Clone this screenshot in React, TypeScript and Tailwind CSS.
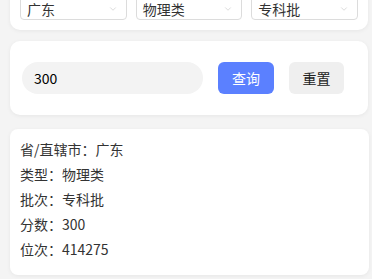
import { ChevronDown } from "lucide-react";

const font = { fontFamily: '"Noto Sans CJK SC", "Noto Sans", sans-serif' };

const selects = ["广东", "物理类", "专科批"];

const details = [
  ["省/直辖市", "广东"],
  ["类型", "物理类"],
  ["批次", "专科批"],
  ["分数", "300"],
  ["位次", "414275"],
];

function SelectBox({ value }: { value: string }) {
  return (
    <div className="flex h-8 w-[107px] items-end justify-between rounded-[4px] border border-[#dcdcdc] bg-white pb-[3px] pl-[6px] pr-[8px]">
      <span className="text-[14px] leading-[14px] text-[#333]">{value}</span>
      <ChevronDown size={10} strokeWidth={1.5} className="mb-[2px] text-[#c6c6c6]" />
    </div>
  );
}

export default function App() {
  return (
    <div className="h-[279px] overflow-hidden bg-[#f4f4f4] pl-[10px]" style={font}>
      <div className="mt-[-22px] w-[358px] rounded-[10px] bg-white p-[10px] shadow-[0_1px_4px_rgba(0,0,0,0.06)]">
        <div className="flex gap-[9px]">
          {selects.map((s) => (
            <SelectBox key={s} value={s} />
          ))}
        </div>
      </div>

      <div className="mt-[11px] flex h-[74px] w-[358px] items-center rounded-[10px] bg-white pl-[12px] shadow-[0_1px_4px_rgba(0,0,0,0.06)]">
        <div className="flex h-8 w-[181px] items-center rounded-full bg-[#f3f3f3] pl-[12px] text-[14px] text-black">
          300
        </div>
        <button className="ml-[15px] h-8 w-[56px] rounded-[6px] bg-[#5b80ff] text-[14px] text-white">
          查询
        </button>
        <button className="ml-[15px] h-8 w-[55px] rounded-[6px] bg-[#efefef] text-[14px] text-[#222]">
          重置
        </button>
      </div>

      <div className="mt-[14px] w-[359px] rounded-[8px] bg-white pb-[13px] pl-[10px] pt-[8px] shadow-[0_1px_4px_rgba(0,0,0,0.06)]">
        {details.map(([k, v]) => (
          <div key={k} className="text-[14px] leading-[25px] text-[#333]">
            {k}：{v}
          </div>
        ))}
      </div>
    </div>
  );
}
